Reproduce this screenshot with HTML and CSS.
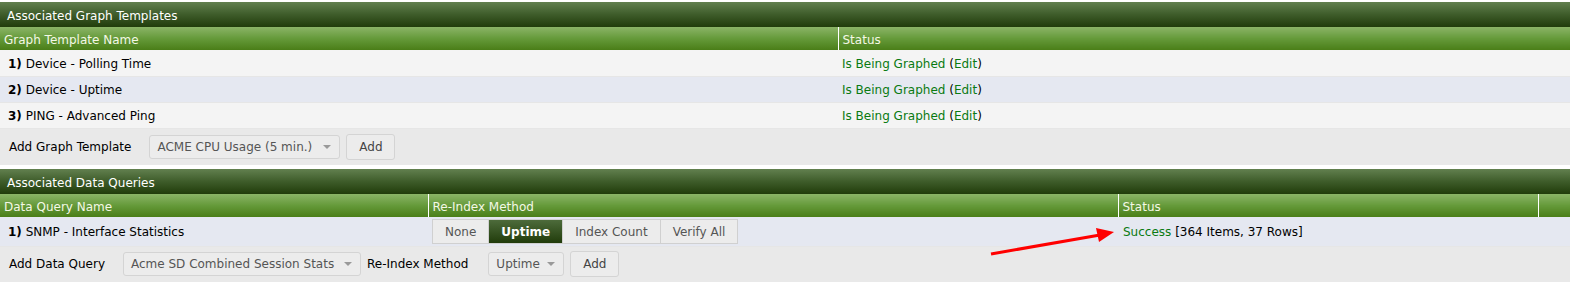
FILE: index.html
```html
<!DOCTYPE html>
<html lang="en">
<head>
  <meta charset="UTF-8" />
  <title>Device - Associated Templates</title>
  <link rel="stylesheet" href="styles.css">
</head>
<body>

  <table class="cactiTable">
    <colgroup>
      <col class="col-gt-name">
      <col>
    </colgroup>
    <tr class="tableTitle"><td colspan="2">Associated Graph Templates</td></tr>
    <tr class="tableHeader">
      <th>Graph Template Name</th>
      <th class="sep">Status</th>
    </tr>
    <tr class="odd">
      <td><b>1)</b> Device - Polling Time</td>
      <td class="status"><span class="ok">Is Being Graphed</span> (<a href="#">Edit</a>)</td>
    </tr>
    <tr class="even">
      <td><b>2)</b> Device - Uptime</td>
      <td class="status"><span class="ok">Is Being Graphed</span> (<a href="#">Edit</a>)</td>
    </tr>
    <tr class="odd">
      <td><b>3)</b> PING - Advanced Ping</td>
      <td class="status"><span class="ok">Is Being Graphed</span> (<a href="#">Edit</a>)</td>
    </tr>
    <tr class="addRow">
      <td colspan="2">
        <div class="addForm">
          <span class="label">Add Graph Template</span>
          <div class="fakeSelect sel-gt">ACME CPU Usage (5 min.) <span class="caret"></span></div>
          <button class="btn">Add</button>
        </div>
      </td>
    </tr>
  </table>

  <table class="cactiTable second">
    <colgroup>
      <col class="col-dq-name">
      <col class="col-dq-method">
      <col class="col-dq-status">
      <col>
    </colgroup>
    <tr class="tableTitle"><td colspan="4">Associated Data Queries</td></tr>
    <tr class="tableHeader">
      <th>Data Query Name</th>
      <th class="sep">Re-Index Method</th>
      <th class="sep">Status</th>
      <th class="sep"></th>
    </tr>
    <tr class="even tall">
      <td><b>1)</b> SNMP - Interface Statistics</td>
      <td class="method">
        <div class="segmented">
          <span class="seg">None</span><span class="seg active">Uptime</span><span class="seg">Index Count</span><span class="seg">Verify All</span>
        </div>
      </td>
      <td class="status"><span class="ok">Success</span> [364 Items, 37 Rows]</td>
      <td></td>
    </tr>
    <tr class="addRow short">
      <td colspan="4">
        <div class="addForm">
          <span class="label">Add Data Query</span>
          <div class="fakeSelect sel-dq">Acme SD Combined Session Stats <span class="caret"></span></div>
          <span class="label">Re-Index Method</span>
          <div class="fakeSelect sel-ri">Uptime <span class="caret"></span></div>
          <button class="btn">Add</button>
        </div>
      </td>
    </tr>
  </table>

  <svg class="annotation" width="140" height="40" viewBox="0 0 140 40">
    <line x1="3" y1="34" x2="112" y2="15" stroke="#ff0000" stroke-width="3" />
    <polygon points="126,12 108,8 111,22" fill="#ff0000" />
  </svg>

</body>
</html>
```

FILE: styles.css
```css
* { box-sizing: border-box; }
body {
  margin: 0;
  padding-top: 2px;
  font-family: "DejaVu Sans", Verdana, sans-serif;
  font-size: 12px;
  color: #000;
  background: #fff;
  position: relative;
}
.cactiTable {
  width: 100%;
  border-collapse: collapse;
  table-layout: fixed;
}
.cactiTable.second { margin-top: 4px; }
.col-gt-name { width: 838px; }
.col-dq-name { width: 428px; }
.col-dq-method { width: 690px; }
.col-dq-status { width: 420px; }

.tableTitle { height: 25px; }
.tableTitle td {
  padding: 2px 0 0 7px;
  color: #fff;
  background: linear-gradient(to bottom, #62804f 0%, #3e5c2a 50%, #213c0b 100%);
}
.tableHeader { height: 23px; }
.tableHeader th {
  padding: 2px 0 0 4px;
  text-align: left;
  font-weight: normal;
  color: #f4f8e6;
  background: linear-gradient(to bottom, #8bb467 0%, #659a3a 50%, #4a7e18 100%);
}
.tableHeader th.sep { border-left: 1px solid #fff; }

.odd, .even { height: 26px; }
.even.tall { height: 29px; }
.odd td, .even td {
  padding: 2px 0 0 8px;
  border-bottom: 1px solid #e6e6e6;
}
.odd td { background: #f4f4f4; }
.even td { background: #e5e8f1; }
.odd td.status, .even td.status { padding-left: 4px; }
.second td.status { padding-left: 5px; }
.second td.method { padding: 0 0 0 4px; }

.ok { color: #0a7a12; }
a { color: #0a7a12; text-decoration: none; }

.addRow { height: 37px; }
.addRow.short { height: 36px; }
.addRow td {
  padding: 0 0 0 9px;
  background: #e9e9e9;
}
.addForm {
  display: flex;
  align-items: center;
  gap: 6px;
}
.label { margin-right: 12px; }
.sel-ri { margin-left: 2px; }
.fakeSelect {
  display: flex;
  align-items: center;
  justify-content: space-between;
  height: 24px;
  padding: 0 8px 0 7px;
  border: 1px solid #d4d4d4;
  border-radius: 3px;
  background: #ececec;
  color: #555;
}
.sel-gt { width: 191px; }
.sel-dq { width: 238px; }
.sel-ri { width: 76px; }
.caret {
  width: 0;
  height: 0;
  border-left: 4px solid transparent;
  border-right: 4px solid transparent;
  border-top: 4px solid #999;
}
.btn {
  height: 26px;
  width: 49px;
  padding: 0;
  border: 1px solid #d4d4d4;
  border-radius: 3px;
  background: #ececec;
  color: #444;
  font-family: inherit;
  font-size: 12px;
}

.segmented {
  display: inline-flex;
  border: 1px solid #d0d0d0;
  background: #d0d0d0;
  gap: 1px;
}
.seg {
  height: 23px;
  line-height: 24px;
  padding: 0 12px;
  background: #ececec;
  color: #555;
}
.seg.active {
  color: #fff;
  font-weight: bold;
  background: linear-gradient(to bottom, #4d6b3b 0%, #213c0b 100%);
}

.annotation {
  position: absolute;
  left: 988px;
  top: 220px;
}
```
